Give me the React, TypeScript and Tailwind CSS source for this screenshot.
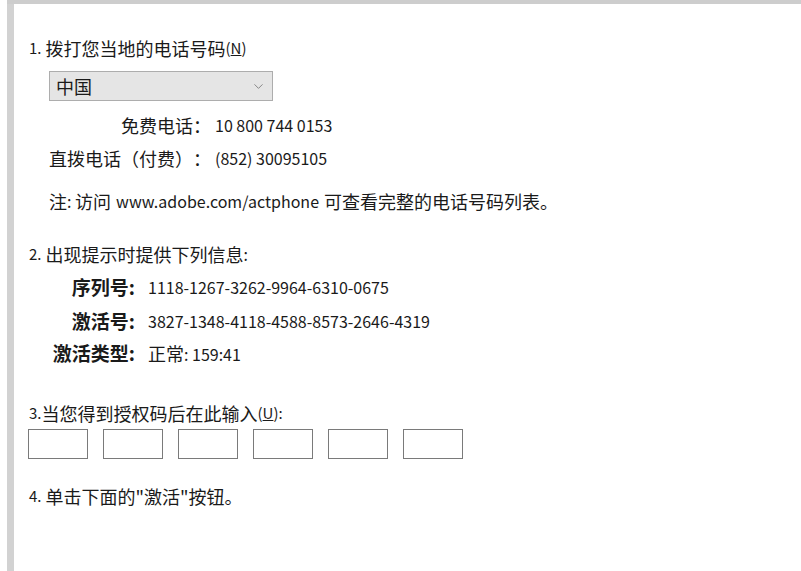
import { ChevronDown } from "lucide-react"

const font = "font-['Noto_Sans_CJK_SC',sans-serif]"

function Row({ className, children }: { className?: string; children: React.ReactNode }) {
  return <div className={`flex h-[20px] items-center whitespace-nowrap ${className ?? ""}`}>{children}</div>
}

export default function App() {
  return (
    <div
      className={`flex h-[571px] w-[801px] bg-white text-[18px] leading-[20px] text-[#1a1a1a] [text-spacing-trim:space-all] ${font}`}
    >
      <div className="w-[7px] shrink-0 bg-white" />
      <div className="flex flex-1 flex-col">
        <div className="h-[4px] bg-[#cdcdcd]" />
        <div className="flex flex-1">
          <div className="w-[7px] shrink-0 bg-[#d2d2d2]" />
          <div className="flex flex-1 flex-col pl-[15px] pt-[34px]">
            <Row>
              <span className="text-[15px]">1.</span>&nbsp;拨打您当地的电话号码<span className="text-[15px]">(<span className="underline">N</span>)</span>
            </Row>

            <div className="ml-[20px] mt-[13px] flex h-[30px] w-[224px] items-center justify-between border border-[#adadad] bg-[#e5e5e5] pl-[6px] pr-[6px]">
              <span>中国</span>
              <ChevronDown className="h-[15px] w-[15px] text-[#6d6d6d]" strokeWidth={1.25} />
            </div>

            <Row className="ml-[20px] mt-[14px]">
              <span className="w-[162px] text-right">免费电话：</span>
              <span className="ml-[4px] text-[16px]">10 800 744 0153</span>
            </Row>
            <Row className="ml-[20px] mt-[13px]">
              <span className="w-[162px] text-right">直拨电话（付费）：</span>
              <span className="ml-[4px] text-[16px]">(852) 30095105</span>
            </Row>

            <Row className="ml-[20px] mt-[23px]">
              注<span className="text-[16px]">:&nbsp;</span>访问<span className="mx-[5px] text-[16px]">www.adobe.com/actphone</span>可查看完整的电话号码列表。
            </Row>

            <Row className="mt-[33px]">
              <span className="text-[15px]">2.</span>&nbsp;出现提示时提供下列信息<span className="text-[16px]">:</span>
            </Row>

            <Row className="ml-[20px] mt-[13px]">
              <span className="w-[86px] text-right text-[19px] font-bold">序列号:</span>
              <span className="ml-[13px] text-[16px]">1118-1267-3262-9964-6310-0675</span>
            </Row>
            <Row className="ml-[20px] mt-[14px]">
              <span className="w-[86px] text-right text-[19px] font-bold">激活号:</span>
              <span className="ml-[13px] text-[16px]">3827-1348-4118-4588-8573-2646-4319</span>
            </Row>
            <Row className="ml-[20px] mt-[12px]">
              <span className="w-[86px] text-right text-[19px] font-bold">激活类型:</span>
              <span className="ml-[13px]">
                正常<span className="text-[16px]">: 159:41</span>
              </span>
            </Row>

            <Row className="mt-[40px]">
              <span className="text-[15px]">3.</span>当您得到授权码后在此输入<span className="text-[15px]">(<span className="underline">U</span>):</span>
            </Row>
            <div className="ml-[-1px] mt-[6px] flex gap-[15px]">
              {[0, 1, 2, 3, 4, 5].map((i) => (
                <input
                  key={i}
                  className="h-[30px] w-[60px] border border-[#7a7a7a] bg-white outline-none"
                />
              ))}
            </div>

            <Row className="mt-[27px]">
              <span className="text-[15px]">4.</span>&nbsp;单击下面的"激活"按钮。
            </Row>
          </div>
        </div>
      </div>
    </div>
  )
}
